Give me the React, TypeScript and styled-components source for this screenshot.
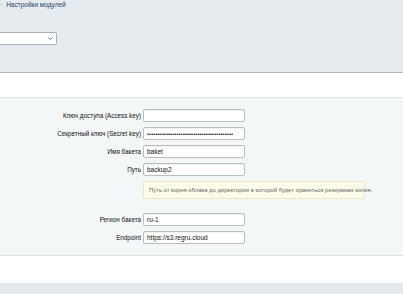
import React from "react";
import styled, { createGlobalStyle } from "styled-components";

const GlobalStyle = createGlobalStyle`
  html, body {
    margin: 0;
    padding: 0;
    background: #ffffff;
    font-family: "Liberation Sans", Arial, sans-serif;
  }
`;

const Page = styled.div`
  width: 403px;
  height: 294px;
  overflow: hidden;
  display: flex;
  flex-direction: column;
`;

const TopBar = styled.div`
  height: 73px;
  background: #e5ebee;
  border-bottom: 1px solid #aeb6ba;
  box-sizing: border-box;
  display: flex;
  flex-direction: column;
  padding-top: 1px;
`;

const Breadcrumbs = styled.div`
  display: flex;
  align-items: center;
  gap: 4px;
  font-size: 6.5px;
  line-height: 7px;
  color: #26436b;
`;

const Crumb = styled.span`
  color: #6d7f8c;
`;

const SelectBox = styled.div`
  margin-top: 24px;
  width: 57px;
  height: 13px;
  box-sizing: border-box;
  background: #ffffff;
  border: 1px solid #a9b1b5;
  border-left: none;
  border-radius: 0 2px 2px 0;
  display: flex;
  align-items: center;
  justify-content: flex-end;
  padding-right: 3px;
`;

const Gap = styled.div`
  height: 24px;
  background: #ffffff;
`;

const Panel = styled.div`
  background: #f4f7f8;
  border-top: 1px solid #dce1e3;
  border-bottom: 1px solid #dce1e3;
  padding: 11px 0 11px;
  display: flex;
  flex-direction: column;
  gap: 5px;
`;

const Row = styled.div`
  display: flex;
  align-items: center;
  height: 13px;
`;

const Label = styled.div`
  width: 141px;
  padding-right: 2px;
  text-align: right;
  font-size: 6.3px;
  color: #111111;
  white-space: nowrap;
`;

const Input = styled.div`
  width: 102px;
  height: 13px;
  box-sizing: border-box;
  background: #ffffff;
  border: 1px solid #b9bec1;
  border-radius: 2px;
  box-shadow: inset 0 1px 1px rgba(0, 0, 0, 0.06);
  font-size: 6.5px;
  color: #111111;
  padding-left: 3px;
  display: flex;
  align-items: center;
  white-space: nowrap;
  overflow: hidden;
`;

const Dots = styled.span`
  font-size: 6px;
  letter-spacing: 0;
  color: #222222;
`;

const Hint = styled.div`
  margin-left: 143px;
  width: 222px;
  height: 18px;
  box-sizing: border-box;
  background: #fdfce9;
  border: 1px solid #ebe7c6;
  border-radius: 2px;
  font-size: 5.9px;
  color: #666666;
  display: flex;
  align-items: center;
  padding-left: 5px;
  white-space: nowrap;
  margin-bottom: 9px;
`;

const Footer = styled.div`
  height: 27px;
  background: #ffffff;
`;

const BottomBar = styled.div`
  flex: 1;
  background: #e3e9ec;
`;

const fields = [
  { label: "Ключ доступа (Access key)", value: "" },
  { label: "Секретный ключ (Secret key)", value: "secret" },
  { label: "Имя бакета", value: "baket" },
  { label: "Путь", value: "backup2" },
];

const fields2 = [
  { label: "Регион бакета", value: "ru-1" },
  { label: "Endpoint", value: "https://s3.regru.cloud" },
];

export default function App() {
  return (
    <Page>
      <GlobalStyle />
      <TopBar>
        <Breadcrumbs>
          <Crumb>·</Crumb>
          <span>Настройки модулей</span>
        </Breadcrumbs>
        <SelectBox>
          <svg width="5" height="3" viewBox="0 0 5 3">
            <path d="M0.5 0.5 L2.5 2.5 L4.5 0.5" fill="none" stroke="#555" strokeWidth="0.8" />
          </svg>
        </SelectBox>
      </TopBar>
      <Gap />
      <Panel>
        {fields.map((f) => (
          <Row key={f.label}>
            <Label>{f.label}</Label>
            <Input>
              {f.value === "secret" ? <Dots>{"•".repeat(41)}</Dots> : f.value}
            </Input>
          </Row>
        ))}
        <Hint>
          Путь от корня облака до директории в которой будет храниться резервная копия.
        </Hint>
        {fields2.map((f) => (
          <Row key={f.label}>
            <Label>{f.label}</Label>
            <Input>{f.value}</Input>
          </Row>
        ))}
      </Panel>
      <Footer />
      <BottomBar />
    </Page>
  );
}
